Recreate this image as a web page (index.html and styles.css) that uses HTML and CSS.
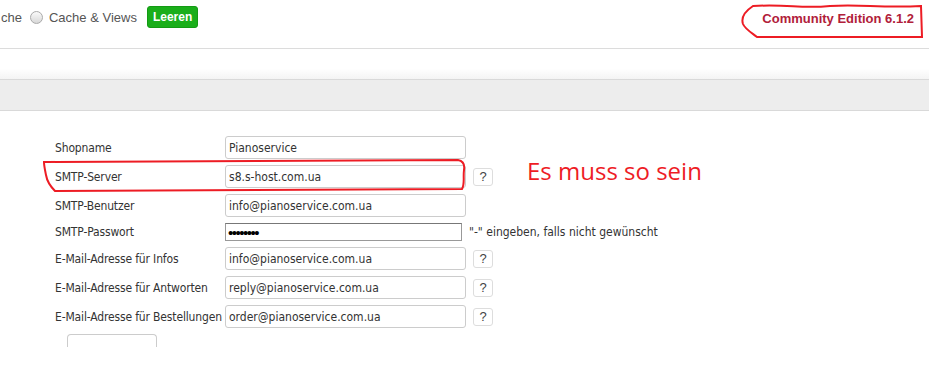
FILE: index.html
```html
<!DOCTYPE html>
<html lang="de">
<head>
    <meta charset="UTF-8">
    <title>Konfiguration</title>
    <link rel="stylesheet" href="styles.css">
</head>
<body>
    <div class="header">
        <div class="cache">
            <span>che</span>
            <span class="radio"></span>
            <span>Cache &amp; Views</span>
            <button class="btn-green">Leeren</button>
        </div>
        <div class="edition">Community Edition 6.1.2</div>
    </div>
    <div class="subbar"></div>
    <div class="toolbar"></div>

    <table class="config">
        <tr>
            <td class="label">Shopname</td>
            <td><input class="field" type="text" value="Pianoservice"></td>
            <td></td>
        </tr>
        <tr>
            <td class="label">SMTP-Server</td>
            <td><input class="field" type="text" value="s8.s-host.com.ua"></td>
            <td><span class="help">?</span></td>
        </tr>
        <tr>
            <td class="label">SMTP-Benutzer</td>
            <td><input class="field" type="text" value="info@pianoservice.com.ua"></td>
            <td></td>
        </tr>
        <tr class="short">
            <td class="label">SMTP-Passwort</td>
            <td><input class="pass" type="password" value="12345678"></td>
            <td class="hint">"-" eingeben, falls nicht gewünscht</td>
        </tr>
        <tr>
            <td class="label">E-Mail-Adresse für Infos</td>
            <td><input class="field" type="text" value="info@pianoservice.com.ua"></td>
            <td><span class="help">?</span></td>
        </tr>
        <tr>
            <td class="label">E-Mail-Adresse für Antworten</td>
            <td><input class="field" type="text" value="reply@pianoservice.com.ua"></td>
            <td><span class="help">?</span></td>
        </tr>
        <tr>
            <td class="label">E-Mail-Adresse für Bestellungen</td>
            <td><input class="field" type="text" value="order@pianoservice.com.ua"></td>
            <td><span class="help">?</span></td>
        </tr>
    </table>
    <div class="save-row"><span class="save"></span></div>

    <div class="note">Es muss so sein</div>

    <svg class="scribble" width="929" height="384" viewBox="0 0 929 384">
        <path d="M753 6 C790 4 800 9 830 6 C860 4 880 8 921 6 L922 37 L757 37 C752 33 745 29 743 24 C741 18 744 12 753 6 Z" />
        <path d="M44 162 L458 160 C463 161 465 164 464 170 C463 178 465 184 462 189 L55 191 C50 186 47 181 46 175 C45 170 44 166 44 162 Z" />
    </svg>
</body>
</html>
```

FILE: styles.css
```css
body {
    margin: 0;
    position: relative;
    font-family: "DejaVu Sans Condensed", "DejaVu Sans", sans-serif;
    font-size: 12px;
    color: #333;
    background: #fff;
    height: 384px;
    overflow: hidden;
}
.header {
    display: flex;
    justify-content: space-between;
    align-items: center;
    height: 48px;
    border-bottom: 1px solid #dcdcdc;
    font-family: "Liberation Sans", Arial, sans-serif;
}
.cache {
    display: flex;
    align-items: center;
    gap: 8px;
    font-size: 13px;
    color: #555;
    margin-left: 1px;
    margin-top: -14px;
}
.radio {
    width: 11px;
    height: 11px;
    border-radius: 50%;
    border: 1px solid #aaa;
    background: linear-gradient(#fafafa, #d8d8d8);
    margin-left: 0;
    margin-right: -2px;
}
.btn-green {
    margin-left: 2px;
    background: #1aae1a;
    color: #fff;
    border: 1px solid #149a14;
    border-radius: 3px;
    font-family: "Liberation Sans", Arial, sans-serif;
    font-size: 12px;
    font-weight: bold;
    padding: 3px 5px;
}
.edition {
    color: #b1203a;
    font-weight: bold;
    font-size: 13px;
    margin-right: 15px;
    margin-top: -11px;
}
.subbar {
    height: 30px;
    border-bottom: 1px solid #d9d9d9;
    background: linear-gradient(#fff 0, #fff 65%, #f4f4f4 100%);
}
.toolbar {
    height: 30px;
    background: #ededed;
    border-bottom: 1px solid #d9d9d9;
}
.config {
    border-collapse: collapse;
    margin: 25px 0 0 52px;
}
.config td {
    padding: 0 0 6px 0;
    height: 23px;
    vertical-align: middle;
    white-space: nowrap;
}
.config tr.short td {
    height: 17px;
}
.label {
    width: 170px;
    padding-left: 3px !important;
    letter-spacing: -0.15px;
}
.field {
    box-sizing: border-box;
    width: 241px;
    height: 23px;
    border: 1px solid #ccc;
    border-radius: 3px;
    padding: 0 3px;
    font-family: "DejaVu Sans Condensed", "DejaVu Sans", sans-serif;
    font-size: 12px;
    color: #333;
    display: block;
}
.pass {
    box-sizing: border-box;
    width: 237px;
    height: 18px;
    border: 1px solid #999;
    border-top-color: #777;
    border-radius: 0;
    padding: 0 2px;
    font-family: "Liberation Sans", Arial, sans-serif;
    font-size: 15px;
    letter-spacing: -1.5px;
    display: block;
    color: #000;
}
.help {
    display: inline-block;
    box-sizing: border-box;
    width: 20px;
    height: 18px;
    margin-left: 7px;
    border: 1px solid #ddd;
    border-radius: 3px;
    text-align: center;
    line-height: 16px;
    color: #444;
    font-family: "Liberation Sans", Arial, sans-serif;
    font-size: 13px;
}
.hint {
    padding-left: 3px !important;
}
.save-row {
    margin-left: 67px;
}
.save {
    display: block;
    width: 88px;
    height: 12px;
    border: 1px solid #ccc;
    border-bottom: none;
    border-radius: 4px 4px 0 0;
}
.note {
    position: absolute;
    left: 527px;
    top: 154px;
    color: #ee1c25;
    font-family: "Open Sans", sans-serif;
    font-size: 24px;
}
.scribble {
    position: absolute;
    left: 0;
    top: 0;
    pointer-events: none;
}
.scribble path {
    fill: none;
    stroke: #ed1c24;
    stroke-width: 2;
}
```
